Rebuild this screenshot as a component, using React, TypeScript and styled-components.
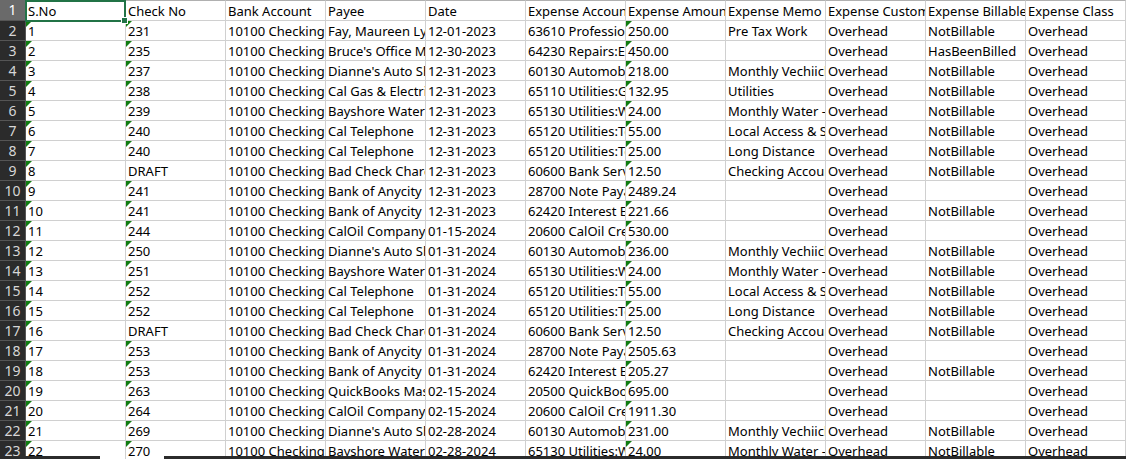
import React from 'react'
import styled, { createGlobalStyle } from 'styled-components'

const headers = [
  'S.No',
  'Check No',
  'Bank Account',
  'Payee',
  'Date',
  'Expense Account',
  'Expense Amount',
  'Expense Memo',
  'Expense Customer',
  'Expense Billable',
  'Expense Class',
]

type Entry = [string, string, string, string, string, string, string, string]

const OVH = 'Overhead'
const NB = 'NotBillable'

const entries: Entry[] = [
  ['231', 'Fay, Maureen Lynn', '12-01-2023', '63610 Professional Fees', '250.00', 'Pre Tax Work', NB, OVH],
  ['235', "Bruce's Office Machines", '12-30-2023', '64230 Repairs:Equipment', '450.00', '', 'HasBeenBilled', OVH],
  ['237', "Dianne's Auto Shop", '12-31-2023', '60130 Automobile', '218.00', 'Monthly Vechiicle', NB, OVH],
  ['238', 'Cal Gas & Electric', '12-31-2023', '65110 Utilities:Gas', '132.95', 'Utilities', NB, OVH],
  ['239', 'Bayshore Water', '12-31-2023', '65130 Utilities:Water', '24.00', 'Monthly Water - Charge', NB, OVH],
  ['240', 'Cal Telephone', '12-31-2023', '65120 Utilities:Telephone', '55.00', 'Local Access & Service', NB, OVH],
  ['240', 'Cal Telephone', '12-31-2023', '65120 Utilities:Telephone', '25.00', 'Long Distance', NB, OVH],
  ['DRAFT', 'Bad Check Charge', '12-31-2023', '60600 Bank Service', '12.50', 'Checking Account', NB, OVH],
  ['241', 'Bank of Anycity', '12-31-2023', '28700 Note Payable', '2489.24', '', '', OVH],
  ['241', 'Bank of Anycity', '12-31-2023', '62420 Interest Expense', '221.66', '', NB, OVH],
  ['244', 'CalOil Company', '01-15-2024', '20600 CalOil Credit', '530.00', '', '', OVH],
  ['250', "Dianne's Auto Shop", '01-31-2024', '60130 Automobile', '236.00', 'Monthly Vechiicle', NB, OVH],
  ['251', 'Bayshore Water', '01-31-2024', '65130 Utilities:Water', '24.00', 'Monthly Water - Charge', NB, OVH],
  ['252', 'Cal Telephone', '01-31-2024', '65120 Utilities:Telephone', '55.00', 'Local Access & Service', NB, OVH],
  ['252', 'Cal Telephone', '01-31-2024', '65120 Utilities:Telephone', '25.00', 'Long Distance', NB, OVH],
  ['DRAFT', 'Bad Check Charge', '01-31-2024', '60600 Bank Service', '12.50', 'Checking Account', NB, OVH],
  ['253', 'Bank of Anycity', '01-31-2024', '28700 Note Payable', '2505.63', '', '', OVH],
  ['253', 'Bank of Anycity', '01-31-2024', '62420 Interest Expense', '205.27', '', NB, OVH],
  ['263', 'QuickBooks Mastercard', '02-15-2024', '20500 QuickBooks Credit', '695.00', '', '', OVH],
  ['264', 'CalOil Company', '02-15-2024', '20600 CalOil Credit', '1911.30', '', '', OVH],
  ['269', "Dianne's Auto Shop", '02-28-2024', '60130 Automobile', '231.00', 'Monthly Vechiicle', NB, OVH],
  ['270', 'Bayshore Water', '02-28-2024', '65130 Utilities:Water', '24.00', 'Monthly Water - Charge', NB, OVH],
]

const GlobalStyle = createGlobalStyle`
  html, body {
    margin: 0;
    padding: 0;
    background: #fff;
    overflow: hidden;
  }
`

const Sheet = styled.div`
  position: relative;
  width: 1126px;
  height: 459px;
  overflow: hidden;
  display: grid;
  grid-template-columns: 26px repeat(11, 100px);
  grid-template-rows: 21px;
  grid-auto-rows: 20px;
  font-family: 'Noto Sans', sans-serif;
  font-size: 13px;
  color: #000;
`

const RowHead = styled.div<{ $active?: boolean }>`
  background: ${({ $active }) => ($active ? '#6a6a6a' : '#2b2b2b')};
  color: ${({ $active }) => ($active ? '#fff' : '#d6d6d6')};
  border-bottom: 1px solid #555;
  border-right: 1px solid #555;
  box-sizing: border-box;
  text-align: center;
  font-size: 14px;
  line-height: 20px;
`

const Cell = styled.div<{ $flag?: boolean }>`
  position: relative;
  box-sizing: border-box;
  padding-left: 2px;
  border-right: 1px solid #d0d0d0;
  border-bottom: 1px solid #d0d0d0;
  line-height: 20px;
  white-space: nowrap;
  overflow: hidden;

  ${({ $flag }) =>
    $flag &&
    `&::before {
      content: '';
      position: absolute;
      left: 0;
      top: 0;
      border-top: 6px solid #107c10;
      border-right: 6px solid transparent;
    }`}
`

const HeadCell = styled(Cell)`
  border-top: 1px solid #b0b0b0;
`

const Selection = styled.div`
  position: absolute;
  left: 25px;
  top: 0;
  width: 101px;
  height: 22px;
  box-sizing: border-box;
  border: 2px solid #217346;
  pointer-events: none;

  &::after {
    content: '';
    position: absolute;
    right: -4px;
    bottom: -4px;
    width: 7px;
    height: 7px;
    background: #217346;
    border: 1px solid #fff;
    box-sizing: border-box;
  }
`

const ScrollEdge = styled.div<{ $left: number; $width: number }>`
  position: absolute;
  bottom: 0;
  left: ${({ $left }) => $left}px;
  width: ${({ $width }) => $width}px;
  height: 3px;
  background: #2b2b2b;
`

const App: React.FC = () => {
  return (
    <>
      <GlobalStyle />
      <Sheet>
        <RowHead $active>1</RowHead>
        {headers.map((h) => (
          <HeadCell key={h}>{h}</HeadCell>
        ))}
        {entries.map((e, i) => (
          <React.Fragment key={i}>
            <RowHead>{i + 2}</RowHead>
            <Cell $flag>{i + 1}</Cell>
            <Cell $flag={e[0] !== 'DRAFT'}>{e[0]}</Cell>
            <Cell>10100 Checking</Cell>
            <Cell>{e[1]}</Cell>
            <Cell>{e[2]}</Cell>
            <Cell>{e[3]}</Cell>
            <Cell $flag>{e[4]}</Cell>
            <Cell>{e[5]}</Cell>
            <Cell>{OVH}</Cell>
            <Cell>{e[6]}</Cell>
            <Cell>{e[7]}</Cell>
          </React.Fragment>
        ))}
        <Selection />
        <ScrollEdge $left={0} $width={100} />
        <ScrollEdge $left={164} $width={962} />
      </Sheet>
    </>
  )
}

export default App
